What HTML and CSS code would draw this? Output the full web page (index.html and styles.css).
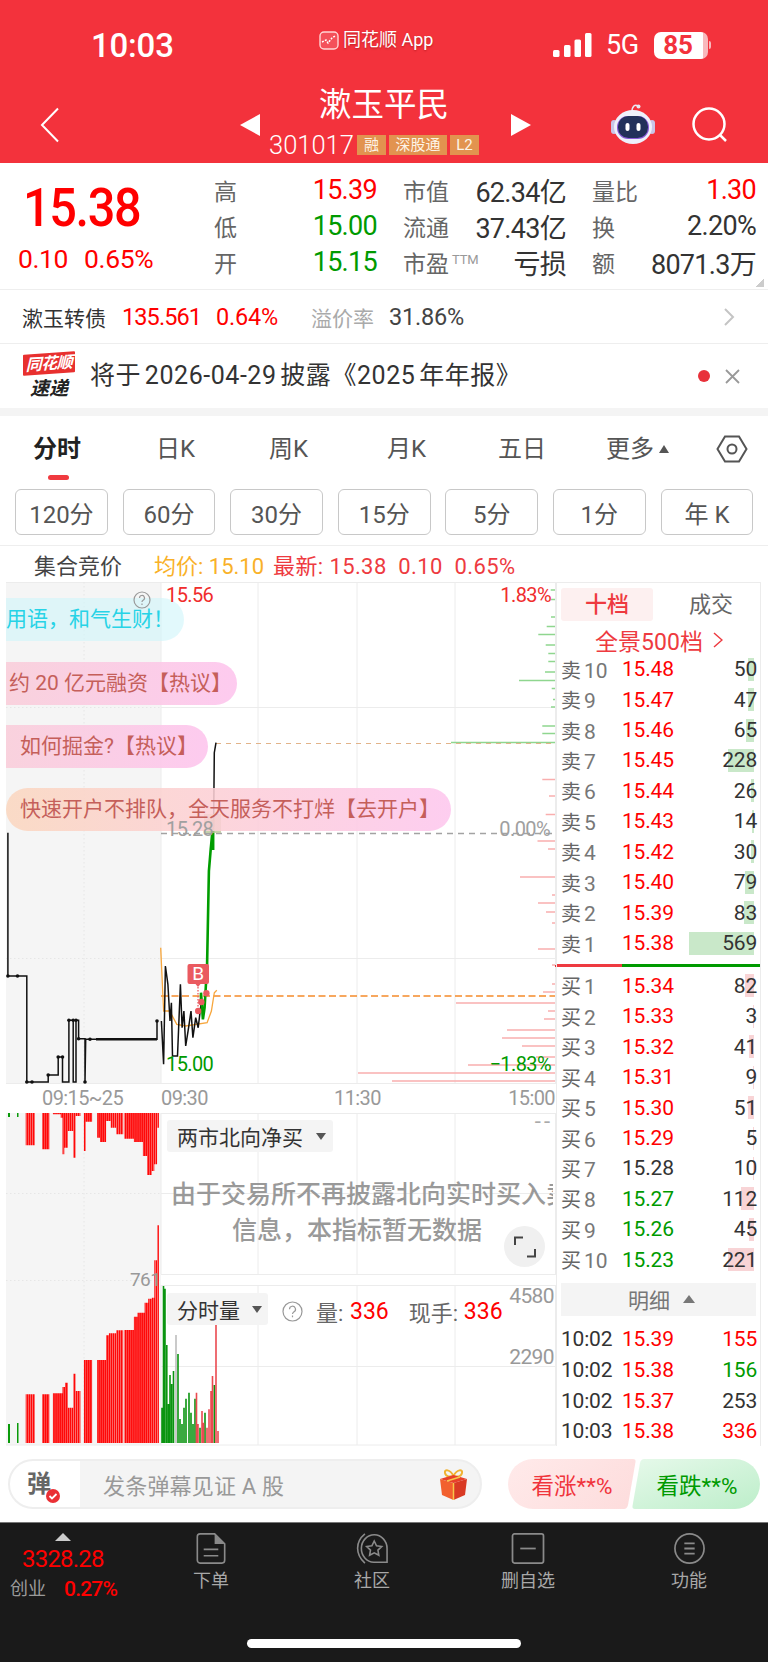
FILE: index.html
```html
<!DOCTYPE html>
<html lang="zh-CN">
<head>
<meta charset="utf-8">
<title>漱玉平民</title>
<link rel="stylesheet" href="styles.css">
</head>
<body>
<div class="page">
  <header class="header">
    <div class="status">
      <div class="time">10:03</div>
      <div class="app">
        <svg class="app-logo" width="20" height="19" viewBox="0 0 20 19"><rect x="1" y="1" width="18" height="17" rx="4" fill="#f4505a" stroke="#ffd5d5" stroke-width="1.4"/><path d="M3 11 7 9l2 3 4-5 3-2" fill="none" stroke="#fff" stroke-width="1.5" stroke-dasharray="2 1.2"/></svg>
        <span>同花顺 App</span>
      </div>
      <div class="sys">
        <svg width="39" height="24" viewBox="0 0 39 24"><g fill="#fff"><rect x="0" y="17" width="6.5" height="7" rx="1.5"/><rect x="11" y="12" width="6.5" height="12" rx="1.5"/><rect x="21.5" y="6.5" width="6.5" height="17.5" rx="1.5"/><rect x="32" y="0" width="6.5" height="24" rx="1.5"/></g></svg>
        <span class="net">5G</span>
        <span class="battery">85</span>
        <i class="nub"></i>
      </div>
    </div>
    <div class="nav">
      <svg class="back" width="20" height="36" viewBox="0 0 20 36"><path d="M18 1.500 2 18l16 16.500" fill="none" stroke="#fff" stroke-width="2"/></svg>
      <i class="tri-l"></i>
      <div class="title-block">
        <div class="name">漱玉平民</div>
        <div class="code-row">
          <span class="code">301017</span>
          <span class="badge b1">融</span>
          <span class="badge b3">深股通</span>
          <span class="badge b1">L2</span>
        </div>
      </div>
      <i class="tri-r"></i>
      <svg class="robot" width="44" height="41" viewBox="0 0 44 41">
        <path d="M21 9C21 3 24 1 27 3" fill="none" stroke="#e8e8f2" stroke-width="1.600"/>
        <circle cx="27.500" cy="3.500" r="2" fill="#e8e8f2"/>
        <rect x="0" y="17" width="6" height="14" rx="3" fill="#c9c5e8"/>
        <rect x="38" y="17" width="6" height="14" rx="3" fill="#c9c5e8"/>
        <ellipse cx="22" cy="24" rx="19" ry="17" fill="#eef0fb"/>
        <rect x="6" y="13" width="32" height="23" rx="11" fill="#8a5bd8"/>
        <rect x="7" y="13" width="30" height="22" rx="10.500" fill="#22305a"/>
        <rect x="14.500" y="20" width="4" height="8" rx="2" fill="#fff"/>
        <rect x="25.500" y="20" width="4" height="8" rx="2" fill="#fff"/>
      </svg>
      <svg class="search" width="36" height="35" viewBox="0 0 36 35"><circle cx="17" cy="17" r="15.500" fill="none" stroke="#fff" stroke-width="2.500"/><path d="m28 28 6 6" stroke="#fff" stroke-width="2.500"/></svg>
    </div>
  </header>

  <section class="quote">
    <div class="last">
      <div class="big">15.38</div>
      <div class="chg"><span>0.10</span><span>0.65%</span></div>
    </div>
    <div class="stats">
      <div class="stat"><span class="k">高</span><span class="v up">15.39</span></div>
      <div class="stat"><span class="k">市值</span><span class="v">62.34亿</span></div>
      <div class="stat"><span class="k">量比</span><span class="v up">1.30</span></div>
      <div class="stat"><span class="k">低</span><span class="v down">15.00</span></div>
      <div class="stat"><span class="k">流通</span><span class="v">37.43亿</span></div>
      <div class="stat"><span class="k">换</span><span class="v">2.20%</span></div>
      <div class="stat"><span class="k">开</span><span class="v down">15.15</span></div>
      <div class="stat"><span class="k">市盈<sup class="ttm">TTM</sup></span><span class="v">亏损</span></div>
      <div class="stat"><span class="k">额</span><span class="v">8071.3万</span></div>
    </div>
    <i class="corner"></i>
  </section>

  <section class="bond">
    <span class="b-name">漱玉转债</span>
    <span class="b-num up b-a">135.561</span>
    <span class="b-num up b-b">0.64%</span>
    <span class="b-lbl">溢价率</span>
    <span class="b-num b-c">31.86%</span>
    <svg class="b-arrow" width="12" height="18" viewBox="0 0 12 18"><path d="m2 1 8 8-8 8" fill="none" stroke="#c4c4c4" stroke-width="2"/></svg>
  </section>

  <section class="notice">
    <div class="logo">
      <div class="logo-top">同花顺</div>
      <div class="logo-bot">速递</div>
    </div>
    <div class="notice-text">将于 2026-04-29 披露《2025 年年报》</div>
    <i class="dot"></i>
    <svg class="close" width="15" height="15" viewBox="0 0 15 15"><path d="m1 1 13 13M14 1 1 14" stroke="#999" stroke-width="1.800"/></svg>
  </section>

  <nav class="tabs">
    <span class="tab active">分时</span>
    <span class="tab t2">日K</span>
    <span class="tab t3">周K</span>
    <span class="tab t4">月K</span>
    <span class="tab t5">五日</span>
    <span class="tab t6">更多<i class="tri-up"></i></span>
    <svg class="hex" width="32" height="28" viewBox="0 0 32 28"><path d="M9 1.500h14L30.500 14 23 26.500H9L1.500 14Z" fill="none" stroke="#555" stroke-width="2"/><circle cx="16" cy="14" r="4.500" fill="none" stroke="#555" stroke-width="2"/></svg>
  </nav>

  <div class="periods">
    <span class="period">120分</span>
    <span class="period">60分</span>
    <span class="period">30分</span>
    <span class="period">15分</span>
    <span class="period">5分</span>
    <span class="period">1分</span>
    <span class="period">年 K</span>
  </div>

  <div class="legend">
    <span class="lg-name">集合竞价</span>
    <span class="lg-avg">均价: 15.10</span>
    <span class="lg-new">最新: 15.38&nbsp; 0.10&nbsp; 0.65%</span>
  </div>

  <main class="main">
    <div class="chart">
      <svg class="plot" width="556" height="864" viewBox="0 0 556 864">
        <defs>
          <pattern id="stripe" width="2.050" height="10" patternUnits="userSpaceOnUse"><rect width="1.750" height="10" fill="#ff0808"/></pattern>
        </defs>
        <rect x="6" y="0" width="155" height="501" fill="#f5f5f5"/>
        <rect x="6" y="531" width="155" height="332" fill="#f5f5f5"/>
        <g stroke="#ececec" stroke-width="1" fill="none">
          <path d="M6 .5H556M161 125.500H556M161 376.500H556M6 501.500H556"/>
          <path d="M161 0V501M258 0V501M357 0V501M455 0V501M555.500 0V501"/>
          <path d="M161 531.500H556M161 611.500H556M161 692.500H556M161 703.500H556M161 784.500H556M6 863H556"/>
          <path d="M161 531V692M258 531V692M357 531V692M455 531V692M555.500 531V692M161 703V863M258 703V863M357 703V863M455 703V863M555.500 703V863"/>
          <path d="M6 125.500H161M6 376.500H161M6 611.500H161M6 698.500H161M84 0V501M84 531V863" stroke="#e6e6e6" stroke-dasharray="1.500 2.500"/>
        </g>

        <g fill="none" stroke="#8fd68f" stroke-width="1.300">
          <path d="M550.700 8H555M550.700 17.500H555M551 35H555M546.700 44.500H555M538.300 52.500H555M545.700 63H555M548.300 71.500H555M548.300 79.500H555M545 90H555M519 98.500H555M551.700 106.500H555M553 117.500H555M551 125H555M542.300 144H555M542.300 151.500H555M451 160.500H555"/>
        </g>
        <g fill="none" stroke="#f9aeae" stroke-width="1.300">
          <path d="M542.300 197.500H555M549 214H555M545.700 232.500H555"/>
          <path d="M537.500 259H555M548 267H555M520 295H555M552 313H555M538 321H555M546 330H555M552 341H555M538 367H555M552 383H555M552 402H555M543 410H555M456 421H555M548 429H555M544 437H555M507 448H555M502 456H555M522 464H555M536 475H555M468 483H555M358 491H555M392 499H555"/>
        </g>
        <path d="M555 384h3" stroke="#e03030" stroke-width="2"/>

        <path d="M216 161.500H555" stroke="#e2b389" stroke-width="1" stroke-dasharray="5 5" fill="none"/>
        <path d="M161 251.500H555" stroke="#a3a3a3" stroke-width="1.300" stroke-dasharray="6 5" fill="none"/>
        <path d="M161 414H555" stroke="#f58a2a" stroke-width="1.600" stroke-dasharray="7 3.500" fill="none"/>

        <path d="M7.900 250.700V394H26.800V500H48.200V493H58.200V475H62.500V500H68.900V438.300H73.200V500H76V438.300H78.600V456.700H85V500L85.700 457.300H157V439" fill="none" stroke="#111" stroke-width="1.500"/>
        <g fill="#111">
          <circle cx="7.900" cy="394" r="1.800"/><circle cx="17.500" cy="394" r="1.800"/><circle cx="26.800" cy="500" r="1.800"/><circle cx="32" cy="500" r="1.800"/><circle cx="48.200" cy="493" r="1.800"/><circle cx="58.200" cy="475" r="1.800"/><circle cx="62.500" cy="475" r="1.800"/><circle cx="68.900" cy="438.300" r="1.800"/><circle cx="73.200" cy="438.300" r="1.800"/><circle cx="76" cy="438.300" r="1.800"/><circle cx="78.600" cy="456.700" r="1.800"/><circle cx="85" cy="500" r="1.800"/><circle cx="90" cy="457.300" r="1.800"/><circle cx="157" cy="439" r="1.800"/>
          <path d="M96 456h28v2.400H96zM123 456h34v2.400h-34z"/>
        </g>
        <path d="M160.700 365.700 163.600 429H169.600L176.800 442.300 185.700 444 207.100 440.700 211.400 429 214.300 410.700 216.800 408.300" fill="none" stroke="#f7a63c" stroke-width="1.300"/>
        <path d="M161.400 439 163.600 482.300 165.400 384 167.900 402.300 170 439 171.400 420.700 172.500 474H177.500L180.400 402.300 182.100 445.700 183.900 429 185.700 464 188.600 445.700 191 429 192.900 455.700 195.700 435.700 198.200 445.700 201 422.300" fill="none" stroke="#111" stroke-width="1.500"/>
        <path d="M201 422.300V410.700L202.900 437.300 204.600 425.700 207.100 382.300 208.900 289 210.700 267.300 212.500 249" fill="none" stroke="#009d00" stroke-width="2.600"/>
        <path d="M212.700 268V238" stroke="#009d00" stroke-width="3.500" fill="none"/>
        <path d="M212.500 249 213.600 244 214.300 170.700 216 160.700" fill="none" stroke="#111" stroke-width="1.500"/>
        <rect x="204" y="232" width="17" height="19" fill="#b9c79a" opacity=".8"/>

        <g fill="#ea5a60">
          <rect x="187.500" y="382" width="21.500" height="20" rx="2"/>
          <path d="M195.500 402h5l-2.500 3z"/>
          <circle cx="198.200" cy="429" r="3.200"/><circle cx="201.300" cy="420" r="3.200"/><circle cx="206.400" cy="411.300" r="3.200"/>
        </g>
        <path d="M198 405V428" stroke="#ea5a60" stroke-width="1.300" stroke-dasharray="1.500 1.500"/>

        <path fill="url(#stripe)" d="M25.700 531V563.300H35V531ZM42.100 531V567.300H49.300V531ZM52.900 531V532.300H60.700V535.700H62.500V572.300H64.300V565.700H67.900V549H73.200V575.700H75.700V534H80.400V531ZM83.900 531V569H85.700V539.700H92.100V531ZM97.100 531V555.700H100V560H106.100V539H110.700V545.700H116.100V552.300H123.200V531ZM124.300 531V556.700H133.900V560H142.900V574H147.100V593H151.800V589H154.300V582.300H157.100V545.700H158.900V531Z"/>
        <path fill="url(#stripe)" d="M25.700 861V812.300H35V861ZM42.100 861V812.300H49.300V861ZM52.900 861V811.300H62.500V805H65V800.700H67.900V825.700H73.200V791.700H75.700V809H80.400V861ZM83.900 861V778H92.100V861ZM97.100 861V778H106.100V753.300H108.900V751.300H116.100V748.300H123.200V861ZM124.300 861V748H133.900V734.700H137.500V730.700H144.600V720.700H148.200V716.700H151.800V715.700H154.300V678.300H157.100V643.300H158.900V861Z"/>
        <g fill="#0a9a0a"><rect x="8" y="531" width="2" height="4"/><rect x="17" y="531" width="1.500" height="4"/><rect x="8" y="842" width="2" height="19"/><rect x="17" y="841" width="1.500" height="20"/></g>

        <g fill="none" stroke-width="1.600">
          <path stroke="#0a9410" d="M162 861V825.700M163.500 861V704M165 861V706.700M166.800 861V763M168.500 861V822M170 861V793M171.700 861V802M173.500 861V789M178 861V772M180 861V837M182 861V842M184 861V825.700M186 861V816.700M189 861V810.700M191 861V830.700M193 861V842M195 861V816.700M200 861V845.700M205 861V830.700M214.300 861V803"/>
          <path stroke="#bdbdbd" d="M176 861V753"/>
          <path stroke="#ea4a50" d="M196.500 861V810.700M198 861V842M202 861V829M203.500 861V840.700M207 861V845.700M209 861V827.300M211 861V809M212.500 861V794M216 861V730.700M218 861V849"/>
        </g>
      </svg>

      <div class="bubbles">
        <div class="bubble cyan">用语，和气生财！</div>
        <div class="bubble pink b-2">约 20 亿元融资【热议】</div>
        <div class="bubble pink b-3">如何掘金?【热议】</div>
        <div class="bubble peach">快速开户不排队，全天服务不打烊【去开户】</div>
      </div>

      <svg class="help" width="18" height="18" viewBox="0 0 18 18"><circle cx="9" cy="9" r="8" fill="none" stroke="#999" stroke-width="1.200"/><path d="M6.500 7a2.500 2.500 0 1 1 3.600 2.200C9.300 9.700 9 10 9 11M9 12.500v1.500" fill="none" stroke="#999" stroke-width="1.200"/></svg>

      <span class="lbl red l-top">15.56</span>
      <span class="lbl red r-top">1.83%</span>
      <span class="lbl gray l-mid">15.28</span>
      <span class="lbl gray r-mid">0.00%</span>
      <span class="lbl green l-bot">15.00</span>
      <span class="lbl green r-bot">−1.83%</span>
      <span class="lbl b-mark">B</span>

      <span class="lbl axis a1">09:15~25</span>
      <span class="lbl axis a2">09:30</span>
      <span class="lbl axis a3">11:30</span>
      <span class="lbl axis a4">15:00</span>

      <div class="pick p1"><span>两市北向净买</span><i class="tri-dn"></i></div>
      <span class="lbl axis dash">--</span>
      <div class="nodata">
        <div class="nd1">由于交易所不再披露北向实时买入<span class="nd-clip">卖</span></div>
        <div class="nd2">信息，本指标暂无数据</div>
      </div>
      <div class="expand">
        <svg width="22" height="22" viewBox="0 0 22 22"><path d="M1 9V1.500H9M21 13v7.500H13" fill="none" stroke="#444" stroke-width="2"/></svg>
      </div>

      <span class="lbl axis v761">761</span>
      <div class="pick p2"><span>分时量</span><i class="tri-dn"></i></div>
      <div class="volinfo">
        <svg width="21" height="21" viewBox="0 0 21 21"><circle cx="10.500" cy="10.500" r="9.500" fill="none" stroke="#999" stroke-width="1.200"/><path d="M7.500 8.200a3 3 0 1 1 4.300 2.700c-1 .6-1.300 1-1.300 2.100M10.500 14.500v1.800" fill="none" stroke="#999" stroke-width="1.200"/></svg>
        <span class="vi-k vi-a">量:</span><span class="up vi-v">336</span>
        <span class="vi-k vi-b">现手:</span><span class="up vi-v">336</span>
      </div>
      <span class="lbl axis v4580">4580</span>
      <span class="lbl axis v2290">2290</span>
    </div>

    <aside class="book">
      <div class="book-tabs"><span class="bt on">十档</span><span class="bt">成交</span></div>
      <div class="promo">全景500档<svg width="10" height="16" viewBox="0 0 10 16"><path d="m1 1 8 7-8 7" fill="none" stroke="#ee3a40" stroke-width="1.500"/></svg></div>

      <div class="rows sell">
        <div class="row"><span class="side">卖<b>10</b></span><span class="up pr">15.48</span><span class="qty"><i class="sb" style="width:6px"></i><em>50</em></span></div>
        <div class="row"><span class="side">卖<b>9</b></span><span class="up pr">15.47</span><span class="qty"><i class="sb" style="width:6px"></i><em>47</em></span></div>
        <div class="row"><span class="side">卖<b>8</b></span><span class="up pr">15.46</span><span class="qty"><i class="sb" style="width:8px"></i><em>65</em></span></div>
        <div class="row"><span class="side">卖<b>7</b></span><span class="up pr">15.45</span><span class="qty"><i class="sb" style="width:26px"></i><em>228</em></span></div>
        <div class="row"><span class="side">卖<b>6</b></span><span class="up pr">15.44</span><span class="qty"><i class="sb" style="width:3px"></i><em>26</em></span></div>
        <div class="row"><span class="side">卖<b>5</b></span><span class="up pr">15.43</span><span class="qty"><i class="sb" style="width:2px"></i><em>14</em></span></div>
        <div class="row"><span class="side">卖<b>4</b></span><span class="up pr">15.42</span><span class="qty"><i class="sb" style="width:3px"></i><em>30</em></span></div>
        <div class="row"><span class="side">卖<b>3</b></span><span class="up pr">15.40</span><span class="qty"><i class="sb" style="width:9px"></i><em>79</em></span></div>
        <div class="row"><span class="side">卖<b>2</b></span><span class="up pr">15.39</span><span class="qty"><i class="sb" style="width:10px"></i><em>83</em></span></div>
        <div class="row"><span class="side">卖<b>1</b></span><span class="up pr">15.38</span><span class="qty"><i class="sb" style="width:65px"></i><em>569</em></span></div>
      </div>

      <div class="divider"><i></i></div>

      <div class="rows buy">
        <div class="row"><span class="side">买<b>1</b></span><span class="up pr">15.34</span><span class="qty"><i class="bb" style="width:9px"></i><em>82</em></span></div>
        <div class="row"><span class="side">买<b>2</b></span><span class="up pr">15.33</span><span class="qty"><i class="bb" style="width:1px"></i><em>3</em></span></div>
        <div class="row"><span class="side">买<b>3</b></span><span class="up pr">15.32</span><span class="qty"><i class="bb" style="width:5px"></i><em>41</em></span></div>
        <div class="row"><span class="side">买<b>4</b></span><span class="up pr">15.31</span><span class="qty"><i class="bb" style="width:1px"></i><em>9</em></span></div>
        <div class="row"><span class="side">买<b>5</b></span><span class="up pr">15.30</span><span class="qty"><i class="bb" style="width:6px"></i><em>51</em></span></div>
        <div class="row"><span class="side">买<b>6</b></span><span class="up pr">15.29</span><span class="qty"><i class="bb" style="width:1px"></i><em>5</em></span></div>
        <div class="row"><span class="side">买<b>7</b></span><span class="pr">15.28</span><span class="qty"><i class="bb" style="width:1px"></i><em>10</em></span></div>
        <div class="row"><span class="side">买<b>8</b></span><span class="down pr">15.27</span><span class="qty"><i class="bb" style="width:13px"></i><em>112</em></span></div>
        <div class="row"><span class="side">买<b>9</b></span><span class="down pr">15.26</span><span class="qty"><i class="bb" style="width:5px"></i><em>45</em></span></div>
        <div class="row"><span class="side">买<b>10</b></span><span class="down pr">15.23</span><span class="qty"><i class="bb" style="width:26px"></i><em>221</em></span></div>
      </div>

      <div class="detail-head">明细<i class="tri-up big-tri"></i></div>
      <div class="rows ticks">
        <div class="row"><span class="tm">10:02</span><span class="up pr">15.39</span><span class="qty"><em class="up">155</em></span></div>
        <div class="row"><span class="tm">10:02</span><span class="up pr">15.38</span><span class="qty"><em class="down">156</em></span></div>
        <div class="row"><span class="tm">10:02</span><span class="up pr">15.37</span><span class="qty"><em>253</em></span></div>
        <div class="row"><span class="tm">10:03</span><span class="up pr">15.38</span><span class="qty"><em class="up">336</em></span></div>
      </div>
    </aside>
  </main>

  <div class="actions">
    <div class="danmu">
      <div class="dm-icon">
        <span>弹</span>
        <svg class="dm-check" width="14" height="14" viewBox="0 0 14 14"><circle cx="7" cy="7" r="7" fill="#ea3035"/><path d="m3.500 7 2.500 2.500L10.500 5" fill="none" stroke="#fff" stroke-width="1.800"/></svg>
      </div>
      <span class="dm-text">发条弹幕见证 A 股</span>
      <svg class="gift" width="31" height="32" viewBox="0 0 31 32">
        <path d="M15.500 8C12 1 6 1 7 5s5 4 8.500 3ZM15.500 8C19 1 25 1 24 5s-5 4-8.500 3Z" fill="none" stroke="#f0b232" stroke-width="2"/>
        <path d="M2 11 15.500 7 29 11 15.500 15Z" fill="#e8402a"/>
        <path d="M2 11 15.500 15V32L4 27Z" fill="#f2602e"/>
        <path d="M29 11 15.500 15V32L27 27Z" fill="#d93a24"/>
        <path d="M9 13 22 9M15.500 15V32" stroke="#f7c64a" stroke-width="1.500"/>
      </svg>
    </div>
    <div class="vote rise">看涨**%</div>
    <div class="vote fall">看跌**%</div>
  </div>

  <footer class="bottom">
    <div class="index">
      <i class="idx-tri"></i>
      <div class="idx-num">3328.28</div>
      <div class="idx-row"><span class="idx-name">创业</span><span class="idx-pct">0.27%</span></div>
    </div>
    <div class="menu m1">
      <svg width="32" height="34" viewBox="0 0 32 34"><path d="M4 1H20L31 12V30a3 3 0 0 1-3 3H4a3 3 0 0 1-3-3V4a3 3 0 0 1 3-3Z" fill="none" stroke="#8a8a8a" stroke-width="1.800"/><path d="M20 1 31 12H20Z" fill="#8a8a8a"/><path d="M8 18H24M8 25H24" stroke="#8a8a8a" stroke-width="1.800"/></svg>
      <span>下单</span>
    </div>
    <div class="menu m2">
      <svg width="36" height="35" viewBox="0 0 36 35"><path d="M10 34C-1 24-1 10 10 1" fill="none" stroke="#8a8a8a" stroke-width="1.800"/><path d="M35 33H20A14.500 15.500 0 1 1 35 17.500Z" fill="none" stroke="#8a8a8a" stroke-width="1.800"/><path d="m20.500 9 2.600 5.400 5.900.800-4.300 4.100 1 5.900-5.200-2.800-5.200 2.800 1-5.900-4.300-4.100 5.900-.800Z" fill="none" stroke="#8a8a8a" stroke-width="1.800"/></svg>
      <span>社区</span>
    </div>
    <div class="menu m3">
      <svg width="34" height="32" viewBox="0 0 34 32"><rect x="1" y="1" width="32" height="30" rx="2" fill="none" stroke="#8a8a8a" stroke-width="1.800"/><path d="M9 16H25" stroke="#8a8a8a" stroke-width="1.800"/></svg>
      <span>删自选</span>
    </div>
    <div class="menu m4">
      <svg width="33" height="33" viewBox="0 0 33 33"><circle cx="16.500" cy="16.500" r="15.500" fill="none" stroke="#8a8a8a" stroke-width="1.800"/><path d="M11 11H22M11 16.500H22M11 22H22" stroke="#8a8a8a" stroke-width="2"/></svg>
      <span>功能</span>
    </div>
    <i class="home"></i>
  </footer>
</div>
</body>
</html>
```

FILE: styles.css
```css
* { box-sizing: border-box; }
html, body { margin: 0; padding: 0; background: #fff; }
body {
  width: 768px;
  height: 1662px;
  overflow: hidden;
  font-family: Roboto, "Noto Sans CJK SC", sans-serif;
  color: #333;
}
i { display: block; font-style: normal; }
em { font-style: normal; }
.up { color: #f00; }
.down { color: #009a00; }

.page { width: 768px; height: 1662px; display: flex; flex-direction: column; }

/* header */
.header { height: 163px; background: #f3323c; color: #fff; flex: none; }
.status { height: 86px; display: flex; align-items: flex-start; padding: 29px 0 0 91px; }
.time { width: 228px; font-size: 33px; line-height: 34px; font-weight: 500; letter-spacing: -.2px; }
.app { width: 234px; display: flex; align-items: center; gap: 4px; font-size: 18px; line-height: 22px; text-shadow: 0 1px 2px rgba(120,0,0,.45); }
.sys { display: flex; align-items: center; height: 28px; margin-top: 2px; position: relative; }
.net { font-size: 27px; margin-left: 14px; line-height: 28px; letter-spacing: -.5px; }
.battery { margin-left: 15px; width: 54px; height: 27px; border-radius: 7px; background: linear-gradient(90deg,#fff 90%,#f8b8bc 90%); color: #f3323c; font-size: 26px; font-weight: 700; line-height: 27px; text-align: center; padding-right: 5px; }
.nub { width: 2.500px; height: 8px; background: #f8b8bc; border-radius: 0 2px 2px 0; margin-left: 1px; }

.nav { height: 77px; display: flex; align-items: center; padding-left: 40px; }
.back { flex: none; margin-right: 180px; }
.tri-l { flex: none; width: 0; height: 0; border: 11px solid transparent; border-left: 0; border-right: 20px solid #fff; }
.tri-r { flex: none; width: 0; height: 0; border: 11px solid transparent; border-right: 0; border-left: 20px solid #fff; }
.title-block { width: 251px; height: 71px; align-self: flex-start; margin-top: 1px; }
.name { font-size: 32.500px; line-height: 36px; margin-left: 59px; }
.code-row { display: flex; align-items: center; margin: 12px 0 0 9px; height: 20px; }
.code { font-size: 25.500px; font-weight: 300; width: 88px; line-height: 20px; }
.badge { background: #e2934f; color: #fdf3e6; font-size: 15px; line-height: 20px; height: 20px; text-align: center; }
.badge.b1 { width: 29px; }
.badge.b3 { width: 58px; margin: 0 3px; }
.robot { flex: none; margin-left: 80px; margin-top: -2px; }
.search { flex: none; margin-left: 37px; }

/* quote */
.quote { height: 127px; flex: none; position: relative; display: flex; padding-top: 9px; border-bottom: 1px solid #eee; }
.last { width: 214px; padding-left: 18px; color: #f00; }
.big { font-size: 54px; line-height: 56px; font-weight: 500; letter-spacing: -1.500px; margin: 8px 0 0 5px; transform: scaleX(.9); transform-origin: left center; }
.chg { display: flex; gap: 16px; font-size: 26.500px; line-height: 28px; margin-top: 9px; letter-spacing: -.4px; }
.stats { display: grid; grid-template-columns: 163px 163px 164px; column-gap: 26px; grid-auto-rows: 36px; }
.stat { display: flex; justify-content: space-between; align-items: center; }
.k { font-size: 23px; color: #666; white-space: nowrap; }
.v { font-size: 27px; letter-spacing: -.7px; white-space: nowrap; }
.ttm { font-size: 13px; color: #999; vertical-align: 8px; line-height: 0; margin-left: 3px; letter-spacing: -.2px; }
.corner { position: absolute; right: 4px; bottom: 2px; width: 8px; height: 8px; background: linear-gradient(135deg, transparent 50%, #ccc 50%); }

/* bond */
.bond { height: 54px; flex: none; display: flex; align-items: center; padding-left: 22px; border-bottom: 1px solid #eee; font-size: 21px; }
.b-name { width: 100px; color: #333; font-size: 21px; }
.b-num { font-size: 23.500px; letter-spacing: -.2px; white-space: nowrap; }
.b-a { width: 94px; letter-spacing: -.9px; }
.b-b { width: 95px; }
.b-lbl { width: 78px; color: #aaa; }
.b-c { color: #444; width: 334px; }

/* notice */
.notice { height: 64px; flex: none; display: flex; align-items: center; padding-left: 23px; }
.logo { width: 52px; height: 46px; margin-right: 15px; text-align: center; flex: none; }
.logo-top { height: 21px; background: #e8302f; color: #fff; font-size: 16px; line-height: 21px; font-weight: 700; font-style: italic; transform: skewY(-4deg); border-radius: 1px; letter-spacing: -.5px; }
.logo-bot { font-size: 19px; line-height: 23px; font-weight: 700; font-style: italic; color: #222; margin-top: 3px; }
.notice-text { font-size: 25px; line-height: 32px; width: 608px; color: #333; white-space: nowrap; letter-spacing: .55px; word-spacing: -3px; }
.dot { width: 12px; height: 12px; border-radius: 50%; background: #e8313a; margin-right: 15px; flex: none; }
.close { flex: none; }

/* tabs */
.tabs { margin-top: 8px; border-top: 0; height: 73px; flex: none; display: flex; align-items: flex-start; position: relative; padding: 17px 0 0 33px; font-size: 24px; line-height: 32px; color: #555; box-shadow: 0 -8px 0 #f4f4f4; }
.tab { white-space: nowrap; }
.tab.active { color: #222; font-weight: 700; width: 123px; position: relative; }
.tab.active::after { content: ""; position: absolute; left: 15px; top: 42px; width: 21px; height: 5px; border-radius: 3px; background: #f03a3f; }
.t2 { width: 113px; }
.t3 { width: 118px; }
.t4 { width: 111px; }
.t5 { width: 108px; }
.t6 { display: flex; align-items: center; width: 110px; }
.tri-up { width: 0; height: 0; border: 5.500px solid transparent; border-top: 0; border-bottom: 8px solid #555; margin-left: 5px; }
.hex { flex: none; margin-top: 2px; }

.periods { height: 46px; flex: none; display: flex; gap: 14.800px; padding-left: 15px; }
.period { width: 92.800px; height: 46px; border: 1.500px solid #c8c8c8; border-radius: 6px; font-size: 24px; color: #555; display: flex; align-items: center; justify-content: center; }

.legend { margin-top: 10px; height: 37px; flex: none; border-top: 1px solid #eee; display: flex; align-items: center; padding-left: 34px; font-size: 22px; }
.lg-name { width: 120px; color: #444; white-space: nowrap; }
.lg-avg { width: 119px; color: #f9b128; white-space: nowrap; }
.lg-new { color: #ee3a40; white-space: nowrap; letter-spacing: .4px; }

/* main */
.main { height: 864px; flex: none; display: flex; }
.chart { position: relative; width: 556px; height: 864px; flex: none; }
.plot { position: absolute; left: 0; top: 0; }
.bubbles { position: absolute; left: 6px; top: 0; width: 550px; height: 260px; overflow: hidden; }
.bubble { position: absolute; left: -30px; height: 43px; border-radius: 22px; font-size: 21px; line-height: 43px; white-space: nowrap; }
.cyan { top: 16px; width: 208px; padding-left: 30px; background: rgba(208,245,250,.62); color: #27d3e6; }
.pink { background: linear-gradient(90deg, rgba(249,205,214,.85), rgba(253,200,238,.95)); color: #c55f5a; }
.b-2 { top: 80px; width: 261px; padding-left: 33px; }
.b-3 { top: 143px; width: 232px; padding-left: 44px; }
.peach { left: 0; top: 206px; width: 445px; padding-left: 14px; background: linear-gradient(90deg, rgba(251,214,190,.85), rgba(253,200,238,.9)); color: #c55f5a; }
.help { position: absolute; left: 133px; top: 9px; }

.lbl { position: absolute; font-size: 20px; line-height: 22px; white-space: nowrap; letter-spacing: -.6px; }
.red { color: #f02c2c; }
.gray { color: #a0a0a0; }
.green { color: #009a00; }
.l-top { left: 166px; top: 2px; }
.r-top { right: 5px; top: 2px; }
.l-mid { left: 166px; top: 236px; }
.r-mid { right: 6px; top: 236px; }
.l-bot { left: 166px; top: 471px; }
.r-bot { right: 5px; top: 471px; }
.b-mark { left: 187.500px; top: 381px; width: 21.500px; text-align: center; color: #fff; font-size: 19px; letter-spacing: 0; }
.axis { color: #999; }
.a1 { left: 42px; top: 505px; }
.a2 { left: 161px; top: 505px; }
.a3 { left: 334px; top: 505px; }
.a4 { right: 1px; top: 505px; }

.pick { position: absolute; left: 167px; display: flex; align-items: center; background: #f4f4f4; border-radius: 3px; font-size: 21px; color: #333; padding-left: 10px; }
.p1 { top: 538px; width: 166px; height: 32px; gap: 13px; }
.p2 { top: 711px; width: 101px; height: 32px; gap: 12px; }
.tri-dn { width: 0; height: 0; border: 5.500px solid transparent; border-bottom: 0; border-top: 7px solid #555; }
.dash { right: 3px; top: 529px; color: #aaa; font-size: 22px; letter-spacing: 3px; }
.nodata { position: absolute; left: 161px; top: 595px; width: 392px; overflow: hidden; text-align: center; color: #999; font-size: 25px; line-height: 36px; font-weight: 500; }
.nd1 { white-space: nowrap; text-align: left; padding-left: 10px; }
.nd-clip { display: inline-block; width: 7px; height: 36px; overflow: hidden; vertical-align: top; }
.expand { position: absolute; left: 504px; top: 644px; width: 41px; height: 41px; border-radius: 50%; background: #f0f0f0; display: flex; align-items: center; justify-content: center; }
.v761 { left: 130px; top: 687px; font-size: 19px; }
.volinfo { position: absolute; left: 282px; top: 713px; display: flex; align-items: center; font-size: 23px; }
.vi-k { color: #666; font-size: 22px; white-space: nowrap; }
.vi-a { margin-left: 13px; width: 34px; }
.vi-b { margin-left: 20px; width: 55px; }
.v4580 { right: 2px; top: 703px; font-size: 21px; }
.v2290 { right: 2px; top: 764px; font-size: 21px; }

/* order book */
.book { width: 205px; height: 864px; flex: none; border: 1px solid #ececec; border-bottom: 0; background: #fff; overflow: hidden; padding: 5px 3px 0 4px; }
.book-tabs { display: flex; height: 33px; }
.bt { width: 92px; text-align: center; font-size: 22px; line-height: 33px; color: #666; }
.bt + .bt { margin-left: 12px; width: 92px; }
.bt.on { background: #fdf0f0; color: #ee3a40; border-radius: 3px; font-weight: 500; }
.promo { height: 33px; padding-top: 4px; display: flex; justify-content: center; align-items: center; gap: 10px; color: #ee3a40; font-size: 23px; white-space: nowrap; }
.rows { font-size: 21px; }
.row { height: 30.430px; display: flex; align-items: center; position: relative; }
.side { width: 61px; color: #666; font-size: 20px; white-space: nowrap; }
.side b { font-weight: 400; margin-left: 3px; font-size: 21px; color: #777; }
.tm { width: 61px; color: #333; font-size: 21px; letter-spacing: -.2px; }
.pr { width: 60px; letter-spacing: -.2px; }
.qty { flex: 1; position: relative; height: 23px; display: flex; justify-content: flex-end; align-items: center; }
.qty em { position: relative; letter-spacing: -.2px; }
.sb, .bb { position: absolute; right: 3px; top: 0; height: 23px; }
.sb { background: #c9e8c9; }
.bb { background: #f8d4d6; }
.divider { height: 3px; margin: 5.500px -3px 4px -4px; background: #009a00; }
.divider i { width: 65px; height: 3px; background: #ee3a40; }
.detail-head { height: 33px; margin-top: 8px; margin-right: 1px; background: #f4f4f4; display: flex; align-items: center; justify-content: center; gap: 13px; color: #777; font-size: 21px; padding-left: 6px; }
.big-tri { margin-left: 0; border-left-width: 6px; border-right-width: 6px; border-bottom: 8px solid #777; }
.ticks { margin-top: 8px; }
.ticks .row { height: 30.700px; }

/* actions */
.actions { height: 76px; flex: none; display: flex; align-items: center; position: relative; padding-left: 8px; }
.danmu { width: 474px; height: 50px; border-radius: 25px; border: 2px solid #eee; background: linear-gradient(90deg, #fff 70px, #f4f4f4 70px); display: flex; align-items: center; overflow: hidden; }
.dm-icon { width: 93px; flex: none; position: relative; padding-left: 17px; font-size: 24px; font-weight: 700; color: #666; line-height: 30px; }
.dm-check { position: absolute; left: 36px; top: 20px; }
.dm-text { width: 335px; color: #999; font-size: 22px; white-space: nowrap; letter-spacing: .2px; }
.gift { flex: none; }
.vote { height: 50px; width: 128px; font-size: 22.500px; display: flex; align-items: center; justify-content: center; flex: none; white-space: nowrap; }
.rise { margin-left: 26px; color: #f0343c; background: linear-gradient(135deg,#ffeaea,#fddcdc); clip-path: path("M25 0H125Q128 0 127.500 3L120 46Q119 50 116 50H25A25 25 0 0 1 25 0Z"); }
.fall { margin-left: -4px; color: #009a00; background: linear-gradient(160deg,#e6f9ea,#bdeeca); clip-path: path("M12 0H103A25 25 0 0 1 103 50H3Q0 50 .5 47L8 4Q9 0 12 0Z"); padding-left: 2px; }

/* bottom */
.bottom { height: 141px; flex: none; background: #1a1a1a; border-top: 1px solid #777; position: relative; display: flex; align-items: flex-start; }
.index { width: 171px; flex: none; color: #f00; position: relative; height: 80px; padding-left: 10px; }
.idx-tri { position: absolute; left: 55px; top: 10px; border: 8px solid transparent; border-top: 0; border-bottom: 8px solid #ccc; width: 0; height: 0; }
.idx-num { margin: 23px 0 0 12px; font-size: 24px; line-height: 26px; font-weight: 400; letter-spacing: -.8px; }
.idx-row { display: flex; align-items: center; margin-top: 3px; line-height: 28px; }
.idx-name { color: #9a9a9a; font-size: 18px; width: 54px; }
.idx-pct { font-size: 21px; letter-spacing: -.8px; font-weight: 500; }
.menu { width: 80px; flex: none; height: 70px; padding-top: 10px; display: flex; flex-direction: column; align-items: center; color: #a8a8a8; font-size: 18px; line-height: 24px; position: relative; }
.menu svg { height: 35px; display: block; }
.menu span { margin-top: 5px; white-space: nowrap; }
.m2 { margin-left: 81px; }
.m3 { margin-left: 76px; }
.m4 { margin-left: 81px; }
.home { position: absolute; left: 247px; top: 116px; width: 274px; height: 9px; border-radius: 5px; background: #fff; }
```
